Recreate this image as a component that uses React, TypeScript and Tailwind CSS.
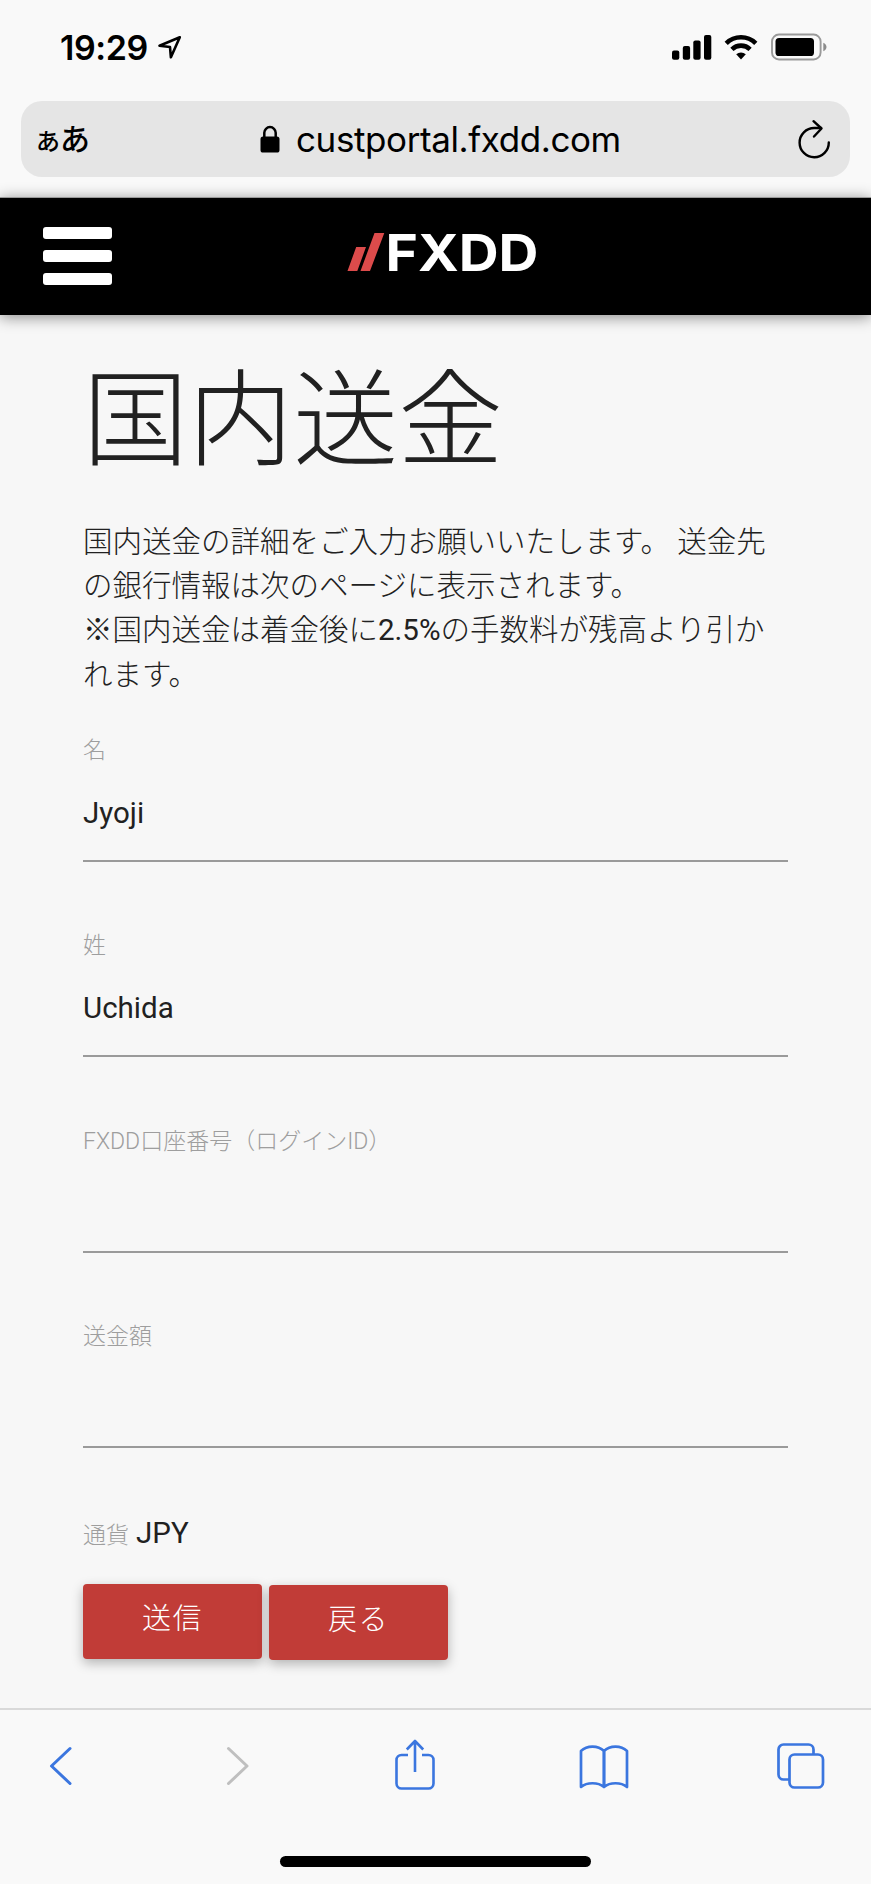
import { useState } from "react";

interface Field {
  id: string;
  label: string;
  value: string;
}

const initialFields: Field[] = [
  { id: "first", label: "名", value: "Jyoji" },
  { id: "last", label: "姓", value: "Uchida" },
  { id: "account", label: "FXDD口座番号（ログインID）", value: "" },
  { id: "amount", label: "送金額", value: "" },
];

function StatusBar() {
  return (
    <div className="flex h-[101px] items-start justify-between pt-[29px] pr-[44px] pl-[60px]">
      <div className="flex items-start gap-[9px]">
        <span className="text-[34px] leading-[38px] font-semibold tracking-[-0.4px]">19:29</span>
        <svg width="26" height="26" viewBox="0 0 26 26" className="mt-[5px]" fill="none" stroke="#000" strokeWidth="2.6" strokeLinejoin="round">
          <path d="M22.8 3.2 2.5 11.8 13 13l.9 10.3z" />
        </svg>
      </div>
      <div className="flex items-start">
        <svg width="40" height="26" viewBox="0 0 40 26" className="mt-[5px]">
          <rect x="0" y="16.5" width="7.3" height="9.3" rx="2" />
          <rect x="10.8" y="12" width="7.3" height="13.8" rx="2" />
          <rect x="21.3" y="6.5" width="7.3" height="19.3" rx="2" />
          <rect x="32" y="1" width="7.3" height="24.8" rx="2" />
        </svg>
        <svg width="34" height="26" viewBox="0 0 34 26" className="mt-[5px] ml-[12px]" fill="none" stroke="#000" strokeWidth="4.6">
          <path d="M2.2 9.3a21.2 21.2 0 0 1 29.6 0" />
          <path d="M7.9 15.3a13.2 13.2 0 0 1 18.2 0" />
          <path d="M12.2 20.3a7 7 0 0 1 9.6 0L17 25.5z" fill="#000" stroke="none" />
        </svg>
        <svg width="56" height="28" viewBox="0 0 56 28" className="mt-[4px] ml-[13px]">
          <rect x="1" y="1.5" width="48.6" height="25" rx="7" fill="none" stroke="#9a9a9a" strokeWidth="1.9" />
          <rect x="4.5" y="5" width="38.5" height="18" rx="3.6" />
          <path d="M52.3 9.7c2 .8 3.2 2.4 3.2 4.3s-1.200 3.500-3.200 4.300z" fill="#8c8c8c" />
        </svg>
      </div>
    </div>
  );
}

function AddressBar() {
  return (
    <div className="mx-[21px] flex h-[76px] items-center rounded-[21px] bg-[#e5e5e5] pr-[19px] pl-[15px]">
      <div className="flex w-[224px] items-baseline pb-[1px] font-['Noto_Sans_CJK_JP',sans-serif] font-medium">
        <span className="text-[24px] leading-[40px]">あ</span>
        <span className="text-[30px] leading-[40px]">あ</span>
      </div>
      <svg width="20" height="28" viewBox="0 0 20 28">
        <rect x="0.500" y="11.500" width="19" height="16" rx="2.600" />
        <path d="M4.300 13V7.800a5.700 5.700 0 0 1 11.400 0V13" fill="none" stroke="#000" strokeWidth="2.500" />
      </svg>
      <span className="ml-[16px] text-[35px] leading-[44px] tracking-[-0.4px]">custportal.fxdd.com</span>
      <svg width="34" height="40" viewBox="0 0 34 40" className="ml-auto" fill="none" stroke="#000" strokeWidth="2.400" strokeLinecap="round" strokeLinejoin="round">
        <path d="M31.800 23.500A14.600 14.600 0 1 1 17.200 9H24" />
        <path d="M16.500 2.200 24.500 9.500 17 17.500" />
      </svg>
    </div>
  );
}

function SiteHeader() {
  return (
    <header className="flex h-[118px] items-start border-t border-[#999] bg-black pt-[29px] pl-[43px] shadow-[0_2px_14px_rgba(0,0,0,0.45)]">
      <button aria-label="menu" className="flex flex-col gap-[11px]">
        <span className="h-[12px] w-[69px] rounded-[3px] bg-white" />
        <span className="h-[12px] w-[69px] rounded-[3px] bg-white" />
        <span className="h-[12px] w-[69px] rounded-[3px] bg-white" />
      </button>
      <svg width="190" height="40" viewBox="0 0 190 40" className="mt-[6px] ml-[235px]">
        <path d="M.5 38 9.200 14h9.800L10.300 38zM13.500 38 27.500 0h9.800L23 38z" fill="#dc4b4b" />
        <text x="38.500" y="37.800" fill="#fff" fontFamily="Inter, sans-serif" fontWeight="700" fontSize="51.500" textLength="153" lengthAdjust="spacingAndGlyphs">
          FXDD
        </text>
      </svg>
    </header>
  );
}

function Toolbar() {
  return (
    <footer className="flex h-[176px] flex-col items-center border-t-2 border-[#d9d9d9] bg-[#f9f9f9]">
      <nav className="flex h-[146px] w-full items-start justify-between pt-[28px] pr-[46px] pl-[49px]" >
        <svg width="24" height="52" viewBox="0 0 24 52" fill="none" stroke="#3b76df" strokeWidth="3" strokeLinecap="round" strokeLinejoin="round">
          <path d="M21 10.500 2.500 28 21 45.500" />
        </svg>
        <svg width="24" height="52" viewBox="0 0 24 52" className="ml-[4px]" fill="none" stroke="#bfbfbf" strokeWidth="3" strokeLinecap="round" strokeLinejoin="round">
          <path d="M3.500 10.500 22 28 3.500 45.500" />
        </svg>
        <svg width="40" height="52" viewBox="0 0 40 52" className="-ml-[3px]" fill="none" stroke="#3b76df" strokeWidth="2.600">
          <path d="M13 17H6.500a5 5 0 0 0-5 5v23.500a5 5 0 0 0 5 5h27a5 5 0 0 0 5-5V22a5 5 0 0 0-5-5H27" />
          <path d="M20 34V3M11.800 11.500 20 3l8.200 8.500" strokeLinejoin="round" />
        </svg>
        <svg width="50" height="52" viewBox="0 0 50 52" className="-ml-[4px]" fill="none" stroke="#3b76df" strokeWidth="2.700" strokeLinejoin="round">
          <path d="M25 13C19 7.200 8 7.200 2 13V49c6-5 17-5 23 0 6-5 17-5 23 0V13C42 7.200 31 7.200 25 13zV49" />
          <path d="M25 13V49" />
        </svg>
        <svg width="48" height="52" viewBox="0 0 48 52" fill="none" stroke="#3b76df" strokeWidth="2.700">
          <path d="M36.500 16.500V11.500a5 5 0 0 0-5-5h-25a5 5 0 0 0-5 5V36.500a5 5 0 0 0 5 5H12" />
          <rect x="12.500" y="16.500" width="33.500" height="33" rx="5" />
        </svg>
      </nav>
      <div className="h-[11px] w-[311px] rounded-full bg-black" />
    </footer>
  );
}

export default function App() {
  const [fields, setFields] = useState(initialFields);

  const update = (id: string, value: string) => {
    setFields((prev) => prev.map((f) => (f.id === id ? { ...f, value } : f)));
  };

  return (
    <div className="flex h-[1884px] w-[871px] flex-col overflow-hidden bg-[#f7f7f7] font-['Inter','Noto_Sans_CJK_JP',sans-serif] text-black">
      <div className="h-[197px] shrink-0 bg-[#f9f9f9]">
        <StatusBar />
        <AddressBar />
      </div>
      <SiteHeader />

      <main className="flex-1 px-[83px] pt-[52px] font-['Roboto','Noto_Sans_CJK_JP',sans-serif] font-light text-[#212121]">
        <h1 className="text-[105px] leading-[110px]">国内送金</h1>
        <p className="mt-[43px] text-[29.5px] leading-[44.2px] whitespace-nowrap">
          国内送金の詳細をご入力お願いいたします。 送金先
          <br />
          の銀行情報は次のページに表示されます。
          <br />
          ※国内送金は着金後に<span className="font-normal">2.5%</span>の手数料が残高より引か
          <br />
          れます。
        </p>

        <form className="mt-[37px]" onSubmit={(e) => e.preventDefault()}>
          {fields.map((f) => (
            <div key={f.id} className="h-[195.5px]">
              <label htmlFor={f.id} className="block text-[23px] leading-[34px] text-[#9e9e9e]">
                {f.label}
              </label>
              <input
                id={f.id}
                value={f.value}
                onChange={(e) => update(f.id, e.target.value)}
                className="block h-[94px] w-[705px] border-b-2 border-[#9a9a9a] bg-transparent pb-[2px] text-[29.500px] font-normal outline-none"
              />
            </div>
          ))}

          <div className="flex h-[68px] items-baseline gap-[7px]">
            <span className="text-[23px] leading-[34px] text-[#9e9e9e]">通貨</span>
            <span className="text-[29.500px] leading-[34px] font-normal">JPY</span>
          </div>
          <div className="flex gap-[7px] text-[29px] tracking-[1.5px] text-white">
            <button className="h-[75px] w-[179px] rounded-[4px] bg-[#c13c37] pb-[4px] shadow-[0_4px_12px_rgba(0,0,0,0.28)]">送信</button>
            <button className="mt-px h-[75px] w-[179px] rounded-[4px] bg-[#c13c37] pb-[4px] shadow-[0_4px_12px_rgba(0,0,0,0.28)]">戻る</button>
          </div>
        </form>
      </main>

      <Toolbar />
    </div>
  );
}
